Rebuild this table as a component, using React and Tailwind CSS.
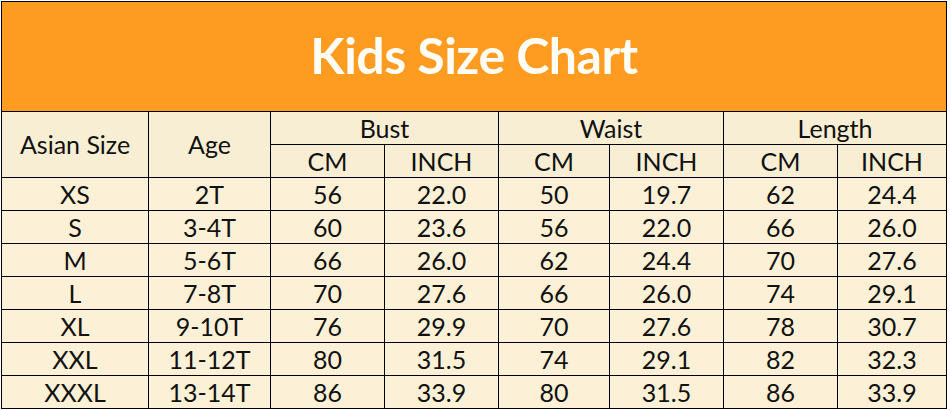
const rows = [
  ['XS', '2T', '56', '22.0', '50', '19.7', '62', '24.4'],
  ['S', '3-4T', '60', '23.6', '56', '22.0', '66', '26.0'],
  ['M', '5-6T', '66', '26.0', '62', '24.4', '70', '27.6'],
  ['L', '7-8T', '70', '27.6', '66', '26.0', '74', '29.1'],
  ['XL', '9-10T', '76', '29.9', '70', '27.6', '78', '30.7'],
  ['XXL', '11-12T', '80', '31.5', '74', '29.1', '82', '32.3'],
  ['XXXL', '13-14T', '86', '33.9', '80', '31.5', '86', '33.9'],
];

const cell = 'flex items-center justify-center border-r border-b border-black';

export default function App() {
  return (
    <div className="w-[950px] h-[410px] bg-white overflow-hidden" style={{ fontFamily: 'Lato, "Open Sans", sans-serif' }}>
      <div className="ml-px mt-px w-fit border-l border-t border-black grid grid-cols-[147px_122px_114px_114px_111px_114px_114px_109px] grid-rows-[110px_repeat(9,33px)] text-[25px] text-[#111] leading-none">
        <div className={`${cell} col-span-8 bg-[#fd9c20]`}>
          <h1 className="text-[#fffdf6] font-bold text-[50px] tracking-[-0.5px] pb-1">Kids Size Chart</h1>
        </div>

        <div className={`${cell} row-span-2 bg-[#f7eed4]`}>Asian Size</div>
        <div className={`${cell} row-span-2 bg-[#f7eed4]`}>Age</div>
        <div className={`${cell} col-span-2 bg-[#f7eed4]`}>Bust</div>
        <div className={`${cell} col-span-2 bg-[#f7eed4]`}>Waist</div>
        <div className={`${cell} col-span-2 bg-[#f7eed4]`}>Length</div>
        {['CM', 'INCH', 'CM', 'INCH', 'CM', 'INCH'].map((u, i) => (
          <div key={i} className={`${cell} bg-[#f7eed4]`}>{u}</div>
        ))}

        {rows.map((r) =>
          r.map((v, i) => (
            <div key={r[0] + i} className={`${cell} bg-[#fcf1d6]`}>{v}</div>
          ))
        )}
      </div>
    </div>
  );
}
